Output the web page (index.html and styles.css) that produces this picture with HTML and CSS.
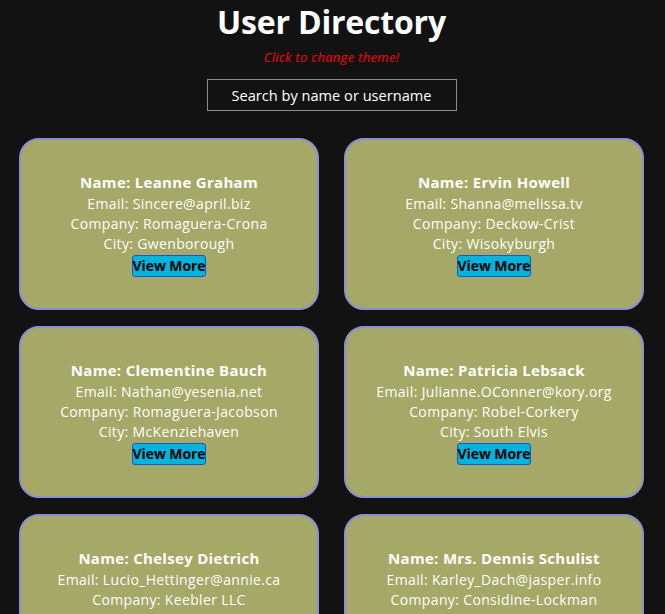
FILE: index.html
```html
<!DOCTYPE html>
<html>
<head>
<meta charset="utf-8">
<link rel="stylesheet" href="styles.css">
</head>
<body>
<h1 class="title">User Directory</h1>
<p class="theme">Click to change theme!</p>
<div class="search-wrap"><input class="search" type="text" placeholder="Search by name or username"></div>
<div class="grid">
  <div class="card">
    <div class="name">Name: Leanne Graham</div>
    <div class="line">Email: Sincere@april.biz</div>
    <div class="line">Company: Romaguera-Crona</div>
    <div class="line">City: Gwenborough</div>
    <button class="btn">View More</button>
  </div>
  <div class="card">
    <div class="name">Name: Ervin Howell</div>
    <div class="line">Email: Shanna@melissa.tv</div>
    <div class="line">Company: Deckow-Crist</div>
    <div class="line">City: Wisokyburgh</div>
    <button class="btn">View More</button>
  </div>
  <div class="card">
    <div class="name">Name: Clementine Bauch</div>
    <div class="line">Email: Nathan@yesenia.net</div>
    <div class="line">Company: Romaguera-Jacobson</div>
    <div class="line">City: McKenziehaven</div>
    <button class="btn">View More</button>
  </div>
  <div class="card">
    <div class="name">Name: Patricia Lebsack</div>
    <div class="line">Email: Julianne.OConner@kory.org</div>
    <div class="line">Company: Robel-Corkery</div>
    <div class="line">City: South Elvis</div>
    <button class="btn">View More</button>
  </div>
  <div class="card">
    <div class="name">Name: Chelsey Dietrich</div>
    <div class="line">Email: Lucio_Hettinger@annie.ca</div>
    <div class="line">Company: Keebler LLC</div>
    <div class="line">City: Roscoeview</div>
    <button class="btn">View More</button>
  </div>
  <div class="card">
    <div class="name">Name: Mrs. Dennis Schulist</div>
    <div class="line">Email: Karley_Dach@jasper.info</div>
    <div class="line">Company: Considine-Lockman</div>
    <div class="line">City: South Christy</div>
    <button class="btn">View More</button>
  </div>
</div>
</body>
</html>
```
FILE: styles.css
```css
html, body {
  margin: 0;
  padding: 0;
  background: #121212;
  font-family: "Open Sans", "Liberation Sans", sans-serif;
  color: #fff;
}
body {
  padding-right: 2px;
}
.title {
  margin: 4px 0 0;
  text-align: center;
  font-size: 32px;
  line-height: 36px;
  font-weight: 700;
  letter-spacing: -0.2px;
}
.theme {
  margin: 9px 0 0;
  text-align: center;
  color: #ff0000;
  font-style: italic;
  font-size: 13px;
  line-height: 16px;
  letter-spacing: 0.3px;
}
.search-wrap {
  display: flex;
  justify-content: center;
  margin-top: 14px;
}
.search {
  width: 250px;
  height: 32px;
  box-sizing: border-box;
  background: #121212;
  border: 1px solid #8a8a8a;
  color: #fff;
  text-align: center;
  font-family: inherit;
  font-size: 14.6px;
  outline: none;
}
.search::placeholder {
  color: #fff;
  opacity: 1;
}
.grid {
  display: grid;
  grid-template-columns: 300px 300px;
  column-gap: 25px;
  row-gap: 16px;
  justify-content: center;
  margin-top: 27px;
}
.card {
  box-sizing: border-box;
  height: 172px;
  background: #a5a866;
  border: 2px solid #8a90d4;
  border-radius: 20px;
  padding-top: 31px;
  display: flex;
  flex-direction: column;
  align-items: center;
  text-align: center;
}
.name {
  font-weight: 700;
  font-size: 15px;
  line-height: 22px;
  margin-bottom: 1px;
  letter-spacing: 0.3px;
}
.line {
  font-size: 14px;
  line-height: 20px;
  letter-spacing: 0.35px;
}
.btn {
  margin-top: 1px;
  height: 22px;
  padding: 0;
  background: #00b4e0;
  border: 1px solid #1c55c8;
  border-radius: 3px;
  color: #000;
  font-family: inherit;
  font-weight: 700;
  font-size: 14px;
  line-height: 18px;
  letter-spacing: -0.1px;
}
```
